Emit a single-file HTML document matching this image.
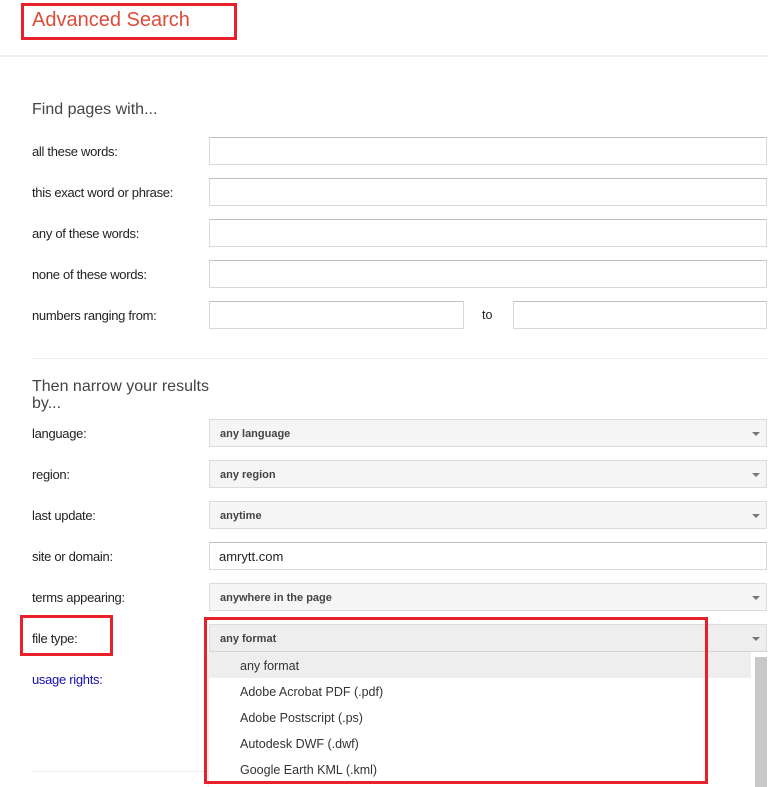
<!DOCTYPE html>
<html><head><meta charset="utf-8"><style>
*{margin:0;padding:0;box-sizing:border-box}
body{width:768px;height:787px;overflow:hidden;background:#fff;font-family:"Liberation Sans",Arial,sans-serif;position:relative;color:#222}
.a{position:absolute}
.lbl{position:absolute;left:32px;font-size:13px;color:#222;letter-spacing:-0.3px}
.in{position:absolute;height:28px;border:1px solid #d9d9d9;border-top-color:#c0c0c0;background:#fff}
.sel{position:absolute;left:209px;width:558px;height:28px;border:1px solid #dcdcdc;background:#f5f5f5;font-size:11px;font-weight:bold;color:#444;padding:8px 0 0 10px}
.sel:after{content:"";position:absolute;right:6px;top:12px;border:4px solid transparent;border-top:4px solid #777}
.red{position:absolute;border:3px solid #e8202a}
.opt{position:absolute;left:240px;font-size:12.5px;color:#333}
</style></head><body>
<div class="red" style="left:21px;top:3px;width:216px;height:37px"></div>
<div class="a" style="left:32px;top:9px;font-size:20px;color:#dd4b39">Advanced Search</div>
<div class="a" style="left:0;top:55px;width:768px;height:2px;background:#f1f1f1"></div>
<div class="a" style="left:32px;top:101px;font-size:16px;color:#444">Find pages with...</div>
<div class="lbl" style="top:144px">all these words:</div><div class="in" style="left:209px;top:137px;width:558px"></div>
<div class="lbl" style="top:185px">this exact word or phrase:</div><div class="in" style="left:209px;top:178px;width:558px"></div>
<div class="lbl" style="top:226px">any of these words:</div><div class="in" style="left:209px;top:219px;width:558px"></div>
<div class="lbl" style="top:267px">none of these words:</div><div class="in" style="left:209px;top:260px;width:558px"></div>
<div class="lbl" style="top:308px">numbers ranging from:</div><div class="in" style="left:209px;top:301px;width:255px"></div>
<div class="a" style="left:482px;top:308px;font-size:12.5px">to</div><div class="in" style="left:513px;top:301px;width:254px"></div>
<div class="a" style="left:32px;top:358px;width:736px;height:1px;background:#ececec"></div>
<div class="a" style="left:32px;top:378px;font-size:16px;line-height:17px;color:#444;width:180px">Then narrow your results by...</div>
<div class="lbl" style="top:426px">language:</div><div class="sel" style="top:419px">any language</div>
<div class="lbl" style="top:467px">region:</div><div class="sel" style="top:460px">any region</div>
<div class="lbl" style="top:508px">last update:</div><div class="sel" style="top:501px">anytime</div>
<div class="lbl" style="top:549px">site or domain:</div><div class="in" style="left:209px;top:542px;width:558px;font-size:13px;padding:6px 0 0 9px">amrytt.com</div>
<div class="lbl" style="top:590px">terms appearing:</div><div class="sel" style="top:583px">anywhere in the page</div>
<div class="lbl" style="top:631px">file type:</div><div class="sel" style="top:624px;background:#eee">any format</div>
<div class="red" style="left:20px;top:615px;width:93px;height:41px"></div>
<div class="lbl" style="top:672px;color:#1a0dab">usage rights:</div>
<div class="a" style="left:32px;top:771px;width:177px;height:1px;background:#ececec"></div>
<div class="a" style="left:209px;top:652px;width:559px;height:135px;background:#fff;box-shadow:0 1px 3px rgba(0,0,0,.2)"></div>
<div class="a" style="left:209px;top:652px;width:542px;height:26px;background:#eee"></div>
<div class="a" style="left:755px;top:657px;width:12px;height:130px;background:#c8c8c8"></div>
<div class="opt" style="top:659px">any format</div>
<div class="opt" style="top:685px">Adobe Acrobat PDF (.pdf)</div>
<div class="opt" style="top:711px">Adobe Postscript (.ps)</div>
<div class="opt" style="top:737px">Autodesk DWF (.dwf)</div>
<div class="opt" style="top:763px">Google Earth KML (.kml)</div>
<div class="red" style="left:204px;top:617px;width:504px;height:167px"></div>
</body></html>
